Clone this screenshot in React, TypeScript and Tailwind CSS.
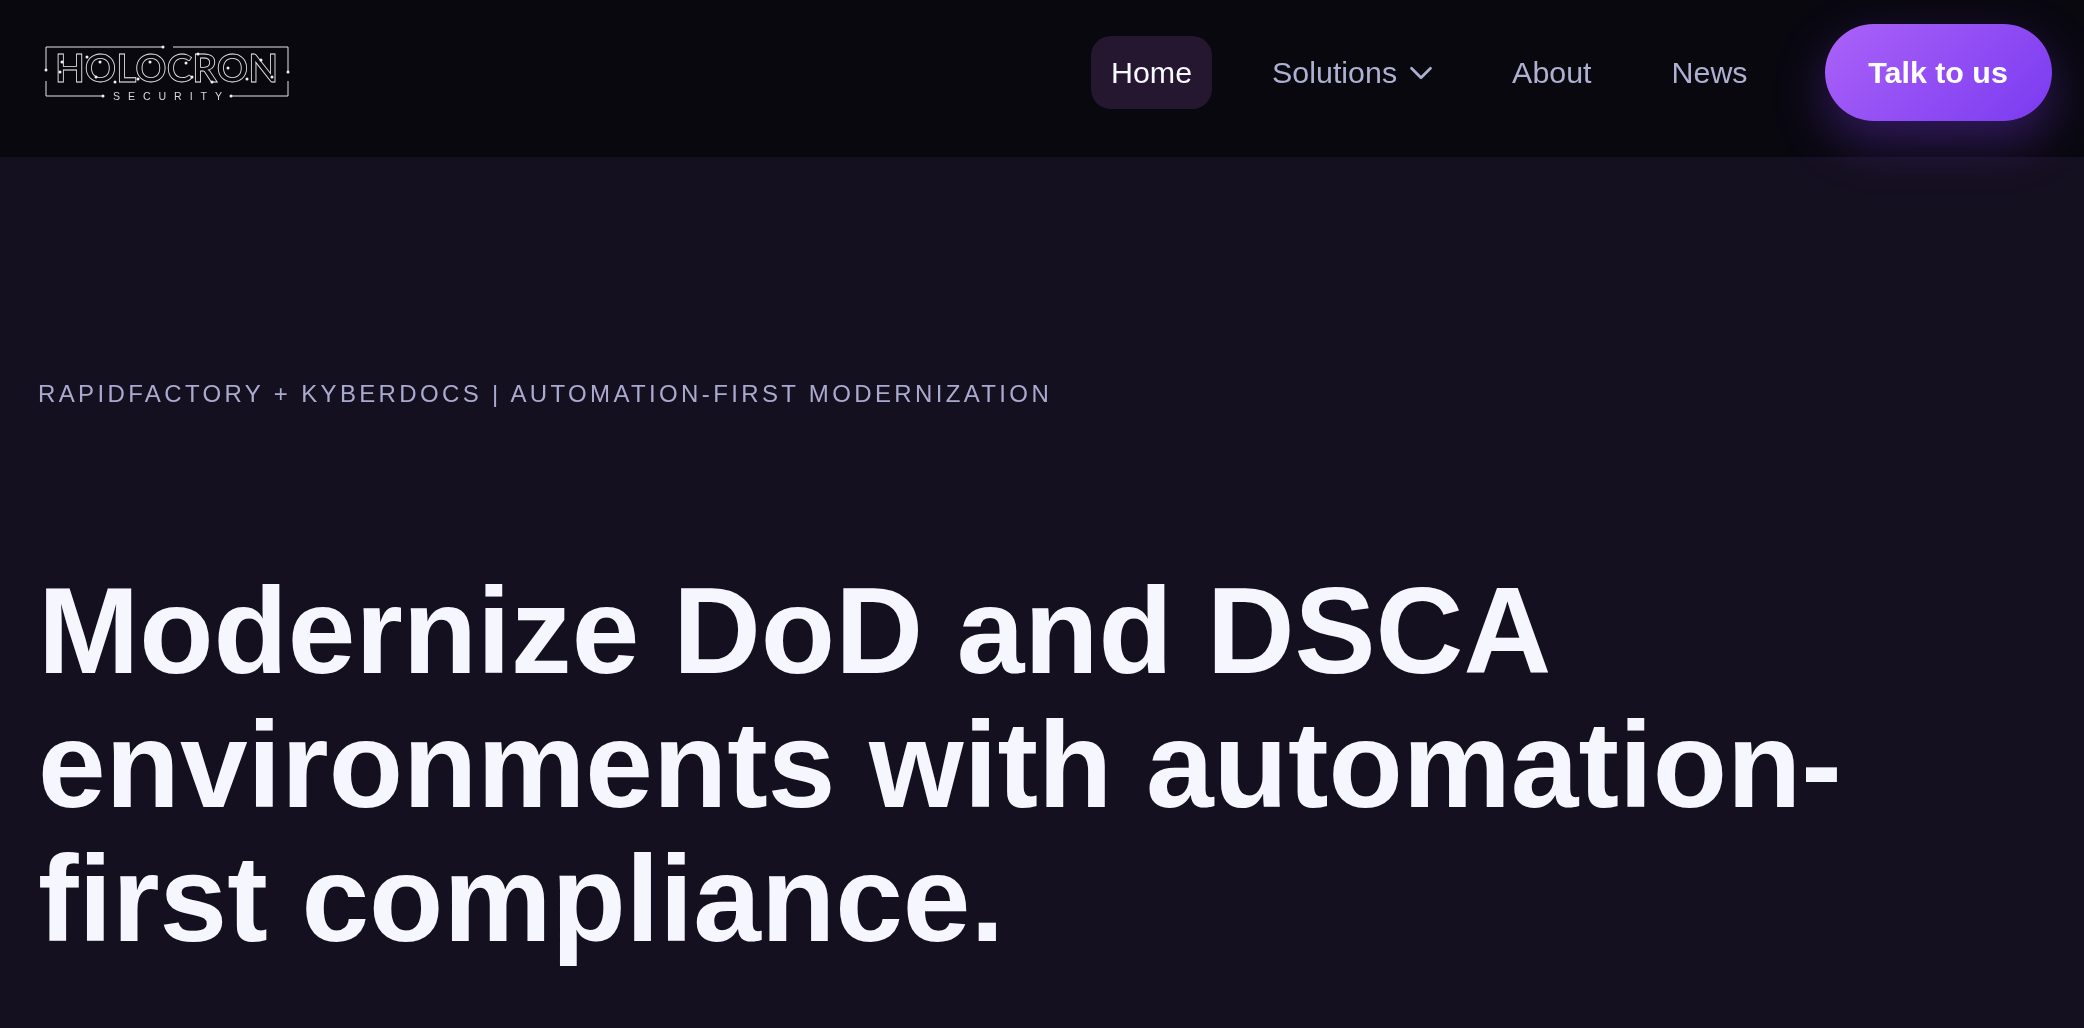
import React from 'react';
import { ChevronDown } from 'lucide-react';

const Dot = ({ x, y, r = 1.5 }: { x: number; y: number; r?: number }) => <circle cx={x} cy={y} r={r} fill="#f2f2f2" stroke="none" />;

// dots along the letters of the wordmark, read off the reference
const LETTER_DOTS = [
  [18, 17], [16, 27], [43, 12], [56, 17], [52, 32], [71, 37], [106, 17], [94, 34],
  [154, 9], [142, 18], [148, 32], [168, 37], [184, 23], [203, 34], [217, 15], [228, 32],
];

const Logo = () => (
  <svg width="248" height="56" viewBox="0 0 248 56" fill="none" stroke="#e6e6e6" strokeWidth="1" role="img" aria-label="Holocron Security">
    {/* frame, broken up like a circuit trace */}
    <path d="M119 2H2V25M2 36V51H59M187 51H244V36M244 27V2H129" />
    <Dot x={119} y={2} />
    <Dot x={2} y={25} />
    <Dot x={59} y={51} />
    <Dot x={187} y={51} />
    <Dot x={244} y={27} />
    <text x="11" y="37" textLength="223" lengthAdjust="spacingAndGlyphs" fontFamily="Lato, 'Liberation Sans', sans-serif" fontWeight="700" fontSize="39" fill="none" stroke="#ededed" strokeWidth="0.8">
      HOLOCRON
    </text>
    {LETTER_DOTS.map(([x, y]) => <Dot key={`${x}-${y}`} x={x} y={y} />)}
    <text x="69" y="54.5" textLength="109" fontFamily="'Liberation Sans', sans-serif" fontSize="10.6" fill="#d8d8d8" stroke="none">
      SECURITY
    </text>
  </svg>
);

const App: React.FC = () => {
  return (
    <div className="min-h-screen bg-[#151020] font-['Liberation_Sans',Arial,sans-serif] overflow-hidden">
      <header className="relative z-10 h-[157px] bg-[#09080f] flex items-center justify-between pl-[44px] pr-[32px] pb-[12px]">
        <a href="#" className="block will-change-transform">
          <Logo />
        </a>
        <nav className="flex items-center text-[30.4px] text-[#adb0d0] will-change-transform">
          <a href="#" className="h-[73px] px-[20px] flex items-center rounded-[20px] bg-[#25172f] text-[#f8f8ff]">Home</a>
          <a href="#" className="ml-[40px] h-[73px] px-[20px] flex items-center">
            Solutions
            <ChevronDown size={38} strokeWidth={1.7} className="ml-[5px] -mr-[8px]" />
          </a>
          <a href="#" className="ml-[40px] h-[73px] px-[20px] flex items-center">About</a>
          <a href="#" className="ml-[40px] h-[73px] px-[20px] flex items-center">News</a>
          <a href="#" className="ml-[57px] w-[227px] h-[97px] flex items-center justify-center rounded-full bg-[linear-gradient(135deg,#ab62f8,#7a3bf0)] text-white font-bold shadow-[0_20px_50px_rgba(124,58,237,0.36)]">
            Talk to us
          </a>
        </nav>
      </header>
      <main className="px-[38px] pt-[221px] will-change-transform">
        <p className="text-[24px] leading-[32px] tracking-[0.14em] text-[#aaaad0]">
          RAPIDFACTORY + KYBERDOCS | AUTOMATION-FIRST MODERNIZATION
        </p>
        <h1 className="mt-[154px] text-[121.6px] leading-[134px] font-bold text-[#f6f6ff]">
          Modernize DoD and DSCA environments with automation-first compliance.
        </h1>
      </main>
    </div>
  );
};

export default App;
